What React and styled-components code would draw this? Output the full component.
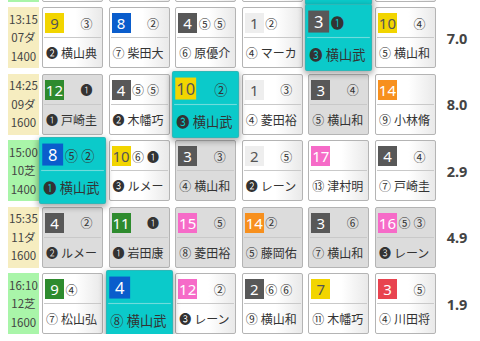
import React from "react";
import styled, { createGlobalStyle } from "styled-components";

const GlobalStyle = createGlobalStyle`
  html, body {
    margin: 0;
    background: #fff;
    overflow: hidden;
  }
  body {
    padding: 0 8px;
    font-family: "Noto Sans", "Noto Sans CJK JP", sans-serif;
    color: #333;
  }
`;

const FRAME = {
  1: { bg: "#eeeeee", fg: "#555" },
  2: { bg: "#585858", fg: "#fff" },
  3: { bg: "#e8434f", fg: "#fff" },
  4: { bg: "#0a5dcc", fg: "#fff" },
  5: { bg: "#f2d500", fg: "#555" },
  6: { bg: "#2e8b2e", fg: "#fff" },
  7: { bg: "#f7901e", fg: "#fff" },
  8: { bg: "#f66bc8", fg: "#fff" },
};

// [馬番, 枠, markA, markB, 着順, 騎手, 背景]
const races = [
  {
    time: "",
    course: "",
    dist: "",
    turf: true,
    odds: "",
    cards: [
      [null, 1, "", "", "", "", "w"],
      [null, 1, "", "", "", "", "w"],
      [null, 1, "", "", "", "", "w"],
      [null, 1, "", "", "", "", "w"],
      [null, 1, "", "", "", "", "h"],
      [null, 1, "", "", "", "", "w"],
    ],
  },
  {
    time: "13:15",
    course: "07ダ",
    dist: "1400",
    turf: false,
    odds: "7.0",
    cards: [
      [9, 5, "", "③", "❷", "横山典", "w"],
      [8, 4, "", "②", "⑦", "柴田大", "w"],
      [4, 2, "⑤", "⑤", "⑥", "原優介", "w"],
      [1, 1, "②", "", "④", "マーカ", "w"],
      [3, 2, "❶", "", "❸", "横山武", "h"],
      [10, 5, "", "④", "⑤", "横山和", "w"],
    ],
  },
  {
    time: "14:25",
    course: "09ダ",
    dist: "1600",
    turf: false,
    odds: "8.0",
    cards: [
      [12, 6, "", "❶", "❶", "戸崎圭", "g"],
      [4, 2, "⑤", "⑤", "❷", "木幡巧", "w"],
      [10, 5, "", "②", "❸", "横山武", "h"],
      [1, 1, "", "③", "④", "菱田裕", "w"],
      [3, 2, "", "④", "⑤", "横山和", "g"],
      [14, 7, "", "", "⑨", "小林脩", "w"],
    ],
  },
  {
    time: "15:00",
    course: "10芝",
    dist: "1400",
    turf: true,
    odds: "2.9",
    cards: [
      [8, 4, "⑤", "②", "❶", "横山武", "h"],
      [10, 5, "⑥", "❶", "❸", "ルメー", "w"],
      [3, 2, "", "③", "④", "横山和", "g"],
      [2, 1, "", "⑤", "❷", "レーン", "w"],
      [17, 8, "", "", "⑬", "津村明", "w"],
      [4, 2, "", "④", "⑦", "戸崎圭", "w"],
    ],
  },
  {
    time: "15:35",
    course: "11ダ",
    dist: "1600",
    turf: false,
    odds: "4.9",
    cards: [
      [4, 2, "", "②", "❷", "ルメー", "g"],
      [11, 6, "", "❶", "❶", "岩田康", "g"],
      [15, 8, "", "⑤", "⑧", "菱田裕", "g"],
      [14, 7, "②", "", "⑤", "藤岡佑", "g"],
      [3, 2, "", "⑥", "⑦", "横山和", "g"],
      [16, 8, "⑤", "③", "❸", "レーン", "g"],
    ],
  },
  {
    time: "16:10",
    course: "12芝",
    dist: "1600",
    turf: true,
    odds: "1.9",
    cards: [
      [9, 6, "④", "", "⑦", "松山弘", "w"],
      [4, 4, "", "", "⑧", "横山武", "h"],
      [12, 8, "", "②", "❸", "レーン", "w"],
      [2, 2, "⑥", "⑥", "⑨", "横山和", "w"],
      [7, 5, "", "", "⑪", "木幡巧", "w"],
      [3, 3, "", "⑤", "④", "川田将", "w"],
    ],
  },
];

const Table = styled.div`
  display: flex;
  flex-direction: column;
  gap: 5.5px;
  margin-top: -59.5px;
`;

const Row = styled.div`
  display: flex;
  align-items: center;
  height: 61px;
`;

const Info = styled.div`
  width: 35px;
  height: 61px;
  margin-right: 3px;
  background: ${(p) => (p.$turf ? "#a9f5a9" : "#f6edc0")};
  display: flex;
  flex-direction: column;
  justify-content: center;
  align-items: center;
  font-family: "Noto Sans CJK JP", sans-serif;
  font-size: 11.5px;
  line-height: 18.5px;
  color: #444;
`;

const Cards = styled.div`
  display: grid;
  grid-template-columns: repeat(6, 61px);
  column-gap: 5.6px;
`;

const Card = styled.div`
  position: relative;
  box-sizing: border-box;
  width: 61px;
  height: 61px;
  border: 1px solid ${(p) => (p.$bg === "h" ? "#2cb8b8" : "#b4b4b4")};
  border-radius: 2px;
  background: ${(p) =>
    p.$bg === "h"
      ? "#0bcaca"
      : p.$bg === "g"
      ? "#dcdcdc"
      : "linear-gradient(to right, #ffffff 55%, #e9e9e9)"};
  display: flex;
  flex-direction: column;
  ${(p) =>
    p.$bg === "h" &&
    `
    transform: scale(1.1);
    z-index: 2;
    box-shadow: 0 2px 6px rgba(0, 0, 0, 0.35);
  `}
`;

const Top = styled.div`
  display: flex;
  align-items: center;
  height: 28px;
  padding: 1px 1px 0;
  border-bottom: 1px solid ${(p) => (p.$hl ? "#6fdcdc" : "#c9c9c9")};
  margin: 0 1px;
`;

const Badge = styled.div`
  width: 19px;
  height: 20px;
  background: ${(p) => FRAME[p.$frame].bg};
  color: ${(p) => FRAME[p.$frame].fg};
  font-size: 15px;
  line-height: 20px;
  text-align: center;
`;

const Slot = styled.span`
  width: 15px;
  text-align: center;
  font-size: 12px;
  color: #333;
  font-family: "Noto Sans CJK JP", sans-serif;
`;

const Name = styled.div`
  flex: 1;
  display: flex;
  align-items: center;
  gap: 3px;
  padding-left: 3px;
  font-size: 12px;
  color: #333;
  white-space: nowrap;
  font-family: "Noto Sans CJK JP", sans-serif;
`;

const Mark = styled.span`
  font-size: 12px;
`;

const Odds = styled.div`
  width: 34px;
  margin-left: 6px;
  text-align: center;
  font-weight: bold;
  font-size: 14.5px;
  color: #444;
`;

const App = () => {
  return (
    <>
      <GlobalStyle />
      <Table>
        {races.map((race, i) => (
          <Row key={i}>
            <Info $turf={race.turf}>
              <div>{race.time}</div>
              <div>{race.course}</div>
              <div>{race.dist}</div>
            </Info>
            <Cards>
              {race.cards.map(([num, frame, a, b, mark, name, bg], j) => (
                <Card key={j} $bg={bg}>
                  <Top $hl={bg === "h"}>
                    {num !== null && <Badge $frame={frame}>{num}</Badge>}
                    <Slot>{a}</Slot>
                    <Slot>{b}</Slot>
                  </Top>
                  <Name>
                    <Mark>{mark}</Mark>
                    {name}
                  </Name>
                </Card>
              ))}
            </Cards>
            <Odds>{race.odds}</Odds>
          </Row>
        ))}
      </Table>
    </>
  );
};

export default App;
